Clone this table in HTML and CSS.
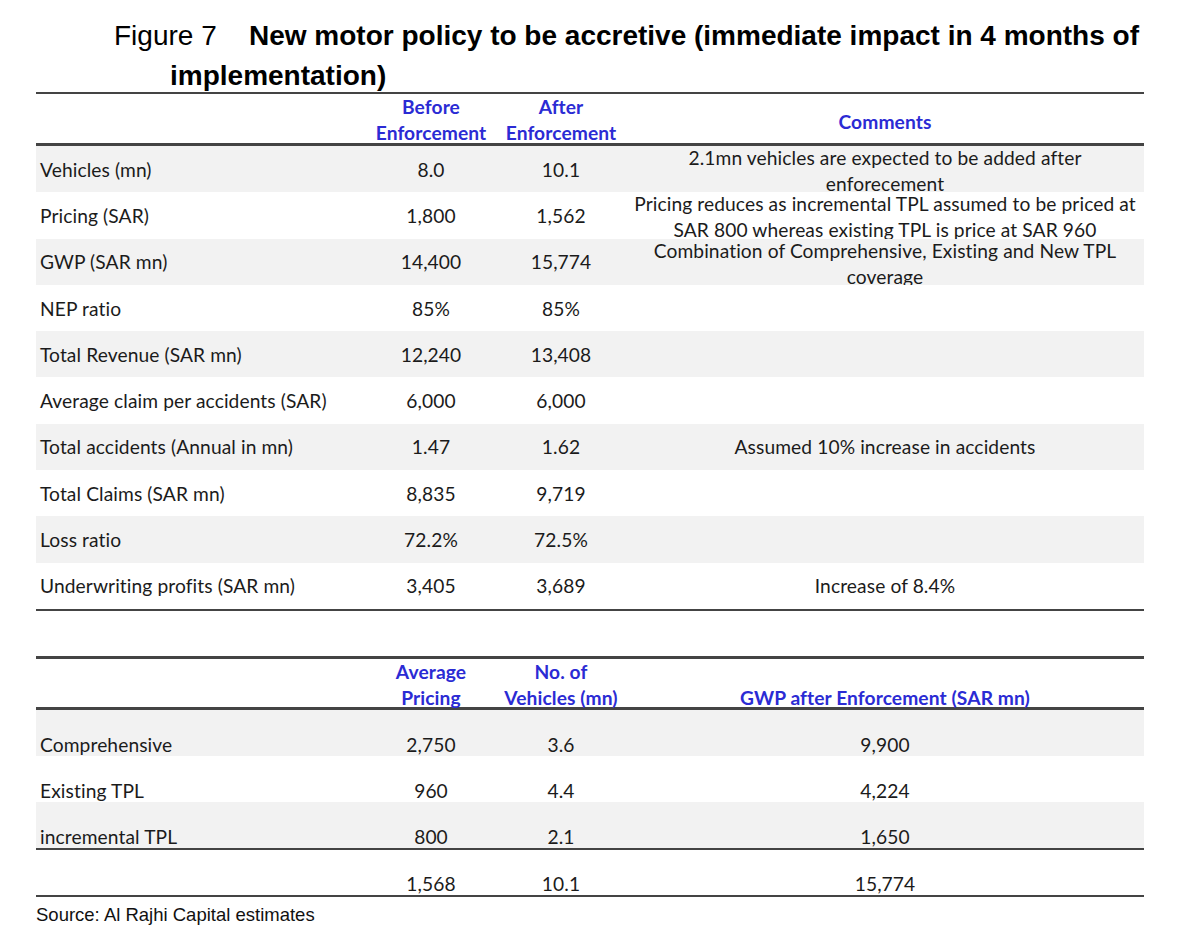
FILE: index.html
```html
<!DOCTYPE html>
<html>
<head>
<meta charset="utf-8">
<link rel="stylesheet" href="styles.css">
</head>
<body>
<div class="page">
  <h1 class="title"><span class="fig">Figure 7</span><b>New motor policy to be accretive (immediate impact in 4 months of implementation)</b></h1>

  <div class="table t1">
    <div class="row head">
      <div class="cell"></div>
      <div class="cell c two">Before<br>Enforcement</div>
      <div class="cell c two">After<br>Enforcement</div>
      <div class="cell c">Comments</div>
    </div>
    <div class="body">
      <div class="row shade"><div class="cell">Vehicles (mn)</div><div class="cell c">8.0</div><div class="cell c">10.1</div><div class="cell c cm">2.1mn vehicles are expected to be added after<br>enforecement</div></div>
      <div class="row"><div class="cell">Pricing (SAR)</div><div class="cell c">1,800</div><div class="cell c">1,562</div><div class="cell c cm">Pricing reduces as incremental TPL assumed to be priced at<br>SAR 800 whereas existing TPL is price at SAR 960</div></div>
      <div class="row shade"><div class="cell">GWP (SAR mn)</div><div class="cell c">14,400</div><div class="cell c">15,774</div><div class="cell c cm">Combination of Comprehensive, Existing and New TPL<br>coverage</div></div>
      <div class="row"><div class="cell">NEP ratio</div><div class="cell c">85%</div><div class="cell c">85%</div><div class="cell c"></div></div>
      <div class="row shade"><div class="cell">Total Revenue (SAR mn)</div><div class="cell c">12,240</div><div class="cell c">13,408</div><div class="cell c"></div></div>
      <div class="row"><div class="cell">Average claim per accidents (SAR)</div><div class="cell c">6,000</div><div class="cell c">6,000</div><div class="cell c"></div></div>
      <div class="row shade"><div class="cell">Total accidents (Annual in mn)</div><div class="cell c">1.47</div><div class="cell c">1.62</div><div class="cell c">Assumed 10% increase in accidents</div></div>
      <div class="row"><div class="cell">Total Claims (SAR mn)</div><div class="cell c">8,835</div><div class="cell c">9,719</div><div class="cell c"></div></div>
      <div class="row shade"><div class="cell">Loss ratio</div><div class="cell c">72.2%</div><div class="cell c">72.5%</div><div class="cell c"></div></div>
      <div class="row"><div class="cell">Underwriting profits (SAR mn)</div><div class="cell c">3,405</div><div class="cell c">3,689</div><div class="cell c">Increase of 8.4%</div></div>
    </div>
  </div>

  <div class="table t2">
    <div class="row head">
      <div class="cell"></div>
      <div class="cell c">Average<br>Pricing</div>
      <div class="cell c">No. of<br>Vehicles (mn)</div>
      <div class="cell c">GWP after Enforcement (SAR mn)</div>
    </div>
    <div class="body">
      <div class="row shade"><div class="cell">Comprehensive</div><div class="cell c">2,750</div><div class="cell c">3.6</div><div class="cell c">9,900</div></div>
      <div class="row"><div class="cell">Existing TPL</div><div class="cell c">960</div><div class="cell c">4.4</div><div class="cell c">4,224</div></div>
      <div class="row shade"><div class="cell">incremental TPL</div><div class="cell c">800</div><div class="cell c">2.1</div><div class="cell c">1,650</div></div>
    </div>
    <div class="total">
      <div class="row"><div class="cell"></div><div class="cell c">1,568</div><div class="cell c">10.1</div><div class="cell c">15,774</div></div>
    </div>
  </div>

  <p class="source">Source: Al Rajhi Capital estimates</p>
</div>
</body>
</html>
```

FILE: styles.css
```css
* { box-sizing: border-box; }
html, body { margin: 0; padding: 0; background: #fff; }
.page { width: 1200px; padding-top: 16px; }

.title {
  margin: 0 0 -4px 0;
  padding-left: 170px;
  text-indent: -56px;
  width: 1170px;
  font-family: "Liberation Sans", Arial, sans-serif;
  font-size: 28px;
  line-height: 40px;
  font-weight: normal;
  color: #000;
}
.title .fig { display: inline-block; width: 135px; text-indent: 0; }
.title b { font-weight: bold; }

.table {
  margin-left: 36px;
  width: 1108px;
  font-family: "Lato", sans-serif;
  font-size: 19.2px;
  letter-spacing: 0.1px;
  color: #1b1b1b;
}
.row {
  display: grid;
  grid-template-columns: 330px 130px 130px 1fr;
}
.cell {
  display: flex;
  align-items: center;
  padding-left: 4px;
  white-space: nowrap;
}
.cell.c { justify-content: center; text-align: center; padding-left: 0; }
.cm { overflow: hidden; line-height: 26px; padding-top: 4px; }

.head .cell { color: #2b2bd4; font-weight: bold; line-height: 26px; }
.head .two { padding-bottom: 4px; }
.shade { background: #f2f2f2; }

.t1 { border-top: 2px solid #444; }
.t1 .head { height: 52px; border-bottom: 3px solid #444; }
.t1 .body { border-bottom: 2px solid #444; }
.t1 .body .row { height: 46.3px; }

.t2 { margin-top: 45px; border-top: 3px solid #444; }
.t2 .head { height: 51px; border-bottom: 3px solid #444; }
.t2 .head .cell { align-items: flex-end; padding-bottom: 5px; }
.t2 .body { border-bottom: 2px solid #444; }
.t2 .body .row { height: 46px; }
.t2 .body .cell, .t2 .total .cell { align-items: flex-end; line-height: 22px; padding-bottom: 0; }
.t2 .total { border-bottom: 2px solid #444; }
.t2 .total .row { height: 45px; }

.source {
  margin: 7px 0 0 36px;
  font-family: "Liberation Sans", Arial, sans-serif;
  font-size: 18.5px;
  color: #111;
}
```
